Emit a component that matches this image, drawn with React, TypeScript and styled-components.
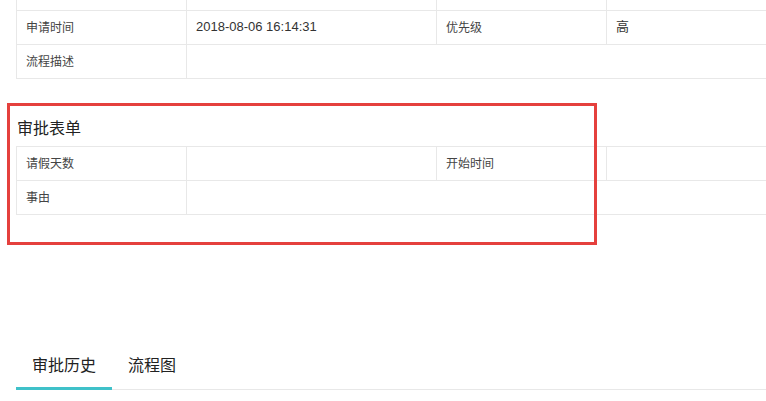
import React from "react";
import styled, { createGlobalStyle } from "styled-components";

const GlobalStyle = createGlobalStyle`
  html, body {
    margin: 0;
    padding: 0;
    background: #fff;
    overflow: hidden;
  }
  body {
    font-family: "Noto Sans CJK SC", "Noto Sans", sans-serif;
    color: #333;
  }
`;

type Cell = { label: string; value?: string; wide?: boolean };

// 第一行已经滚出视口，只剩下边框
const basicRows: Cell[][] = [
  [{ label: "", value: "" }, { label: " ", value: "" }],
  [
    { label: "申请时间", value: "2018-08-06 16:14:31" },
    { label: "优先级", value: "高" },
  ],
  [{ label: "流程描述", value: "", wide: true }],
];

const formRows: Cell[][] = [
  [{ label: "请假天数", value: "" }, { label: "开始时间", value: "" }],
  [{ label: "事由", value: "", wide: true }],
];

export default function App() {
  return (
    <Page>
      <GlobalStyle />
      <ScrolledTable rows={basicRows} />

      <Section>
        <SectionTitle>审批表单</SectionTitle>
        <InfoTable rows={formRows} />
        {/* 标注框 */}
        <Highlight />
      </Section>

      <TabBar>
        <Tab $active>审批历史</Tab>
        <Tab>流程图</Tab>
      </TabBar>
    </Page>
  );
}

function InfoTable({ rows, className }: { rows: Cell[][]; className?: string }) {
  return (
    <Grid className={className}>
      {rows.map((row, r) =>
        row.map((c, i) => (
          <React.Fragment key={`${r}-${i}`}>
            <LabelCell>{c.label}</LabelCell>
            <ValueCell $wide={c.wide}>{c.value}</ValueCell>
          </React.Fragment>
        ))
      )}
    </Grid>
  );
}

/* 页面 */
const Page = styled.div`
  padding-left: 16px;
  width: 800px;
`;

const Grid = styled.div`
  display: grid;
  grid-template-columns: 170px 250px 170px 1fr;
  grid-auto-rows: 34px;
  border-top: 1px solid #e8e8e8;
  border-left: 1px solid #e8e8e8;
  font-size: 12px;
`;

/* 上面的表格已经滚动出去一部分 */
const ScrolledTable = styled(InfoTable)`
  margin-top: -24px;
`;

const CellBase = styled.div`
  display: flex;
  align-items: center;
  padding: 0 9px 1px;
  border-right: 1px solid #e8e8e8;
  border-bottom: 1px solid #e8e8e8;
  line-height: 20px;
  white-space: nowrap;
`;

const LabelCell = styled(CellBase)`
  color: #444;
`;

const ValueCell = styled(CellBase)<{ $wide?: boolean }>`
  color: #333;
  font-family: "Liberation Sans", "Noto Sans CJK SC", sans-serif;
  font-size: 13px;
  grid-column: ${(p) => (p.$wide ? "span 3" : "span 1")};
  border-right: ${(p) => (p.$wide ? "none" : "1px solid #e8e8e8")};
`;

const Section = styled.section`
  position: relative;
  padding-top: 36px;
`;

const SectionTitle = styled.h3`
  margin: 0 0 7px 1px;
  font-size: 16px;
  font-weight: 400;
  line-height: 24px;
  color: #222;
`;

const Highlight = styled.div`
  position: absolute;
  left: -9px;
  top: 24px;
  width: 584px;
  height: 136px;
  border: 3px solid #e5403d;
  pointer-events: none;
`;

const TabBar = styled.div`
  display: flex;
  margin-top: 134px;
  border-bottom: 1px solid #e8e8e8;
`;

const Tab = styled.div<{ $active?: boolean }>`
  position: relative;
  height: 40px;
  padding: 0 16px 10px;
  box-sizing: border-box;
  line-height: 30px;
  font-size: 16px;
  color: #222;

  &::after {
    content: "";
    position: absolute;
    left: 0;
    right: 0;
    bottom: -1px;
    height: 3px;
    background: ${(p) => (p.$active ? "#3fc1c9" : "transparent")};
  }
`;
